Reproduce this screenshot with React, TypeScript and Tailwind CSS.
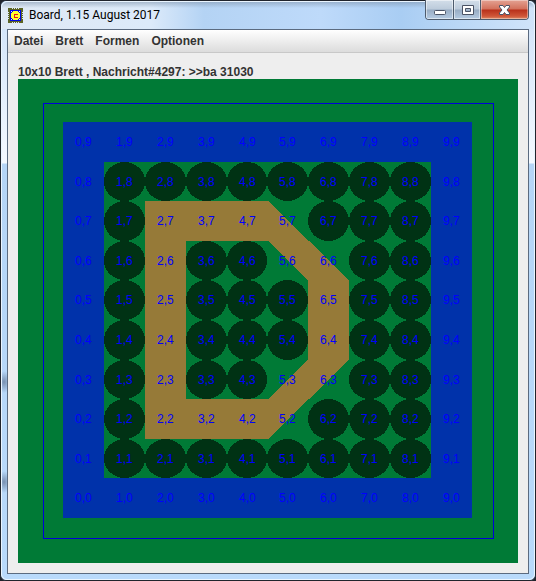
const N = 10;
const xs = [45, 86, 127, 168, 209, 249, 290, 331, 372, 413, 454];
const ys = [43, 83, 122, 162, 201, 241, 281, 320, 360, 399, 439];

// Cells of the inner area that belong to the shape and carry no disc, as "column,row".
const shapeCells = new Set([
  '2,7', '3,7', '4,7', '5,7', '2,6', '5,6', '6,6', '2,5', '6,5', '2,4', '6,4',
  '2,3', '5,3', '6,3', '2,2', '3,2', '4,2', '5,2',
]);

const cells = Array.from({ length: N * N }, (_, k) => {
  const col = k % N;
  const line = Math.floor(k / N);
  const row = N - 1 - line;
  const inner = col > 0 && col < N - 1 && row > 0 && row < N - 1;
  const label = `${col},${row}`;
  return { col, line, label, disc: inner && !shapeCells.has(label) };
});

function Board() {
  return (
    <svg viewBox="0 0 500 484" className="block w-full" role="img" aria-label="10x10 Brett">
      <g shapeRendering="crispEdges">
        <rect width="500" height="484" fill="#007a36" />
        <rect x="25.5" y="24.5" width="450" height="435" fill="none" stroke="#0000d8" />
        <rect x="45" y="43" width="409" height="396" fill="#0032aa" />
        <rect x="86" y="83" width="327" height="316" fill="#007a36" />
        {cells.filter((c) => c.disc).map((c) => (
          <ellipse
            key={c.label}
            cx={(xs[c.col] + xs[c.col + 1]) / 2}
            cy={(ys[c.line] + ys[c.line + 1]) / 2}
            rx={(xs[c.col + 1] - xs[c.col]) / 2}
            ry={(ys[c.line + 1] - ys[c.line]) / 2}
            fill="#003214"
          />
        ))}
        <path
          d="M127 122H250L331 201V281L250 360H127ZM168 162V320H250L290 281V201L250 162Z"
          fill="#967a38"
          fillRule="evenodd"
        />
      </g>
      <g fill="#0000ff" fontSize="12" className="font-['Liberation_Sans',Arial,sans-serif]">
        {cells.map((c) => (
          <text key={c.label} x={xs[c.col] + 12} y={ys[c.line] + 24}>{c.label}</text>
        ))}
      </g>
    </svg>
  );
}

function AppIcon() {
  return (
    <svg viewBox="0 0 15 15" className="size-[15px]" shapeRendering="crispEdges" aria-hidden="true">
      <path d="M0 0h4v1h1V0h1v1h1V0h1v1h1V0h1v1h1V0h4v4h-1v1h1v1h-1v1h1v1h-1v1h1v1h-1v1h1v4h-4v-1h-1v1h-1v-1h-1v1h-1v-1h-1v1h-1v-1h-1v1H0v-4h1v-1H0v-1h1V8H0V7h1V6H0V5h1V4H0z" fill="#5c6424" />
      <path d="M2 2h11v11H2z" fill="#0008e0" />
      <path d="M5 3h5v1h1v1h1v5h-1v1h-1v1H5v-1H4v-1H3V5h1V4h1z" fill="#ffff30" />
      <path d="M6 6h4v1H7v2h3v1H6z" fill="#e81818" />
      <path d="M3 3h1v1H3zM11 3h1v1h-1zM3 11h1v1H3zM11 11h1v1h-1z" fill="#e8f0ff" />
    </svg>
  );
}

const menus = ['Datei', 'Brett', 'Formen', 'Optionen'];

export default function App() {
  return (
    <div className="bg-[#20242c] font-['Liberation_Sans',Arial,sans-serif] text-xs">
      <div className="rounded-t-md rounded-b-md border border-[#20242c] bg-[#b9d8f8]">
        <div className="rounded-md border border-[#eaf5ff] bg-[radial-gradient(ellipse_7px_11px_at_2px_380px,#7890b0,transparent),radial-gradient(ellipse_7px_11px_at_2px_480px,#7890b0,transparent),linear-gradient(to_bottom,#c6dcf4_0px,#d5e6fa_30px,#f4f9ff_161px,#b5d5f6_162px,#b9dafb_100%)] px-[5px] pb-[5px]">
          <header className="-mx-[5px] flex h-[27px] items-start justify-between rounded-t-md bg-[linear-gradient(to_bottom,#8095ad90_0px,transparent_6px),linear-gradient(to_right,#dfe9f4_0%,#dceafa_28%,#b4d3f4_38%,#bedafa_60%,#a9cdf3_75%,#d0e4fa_100%)] pr-[5px] pl-1.5">
            <div className="flex h-[26px] items-center gap-1.5">
              <AppIcon />
              <h1 className="font-[Roboto,'Open_Sans',sans-serif] text-xs leading-4 text-black">Board, 1.15 August 2017</h1>
            </div>
            <div className="-mt-0.5 flex h-5 overflow-hidden rounded-b border border-t-0 border-[#4d5b6c]">
              <button aria-label="Minimieren" className="flex w-7 items-center justify-center border-r border-[#4d5b6c] bg-[linear-gradient(to_bottom,#d3dee9_0%,#bccbdb_48%,#98acc3_52%,#b5cbe2_100%)] shadow-[inset_0_0_0_1px_#ffffff80]">
                <svg viewBox="0 0 13 13" className="size-[13px]"><rect x="1.500" y="7.500" width="11" height="4" rx="1" fill="#fff" stroke="#4a5365" /></svg>
              </button>
              <button aria-label="Maximieren" className="flex w-[27px] items-center justify-center border-r border-[#4d5b6c] bg-[linear-gradient(to_bottom,#d3dee9_0%,#bccbdb_48%,#98acc3_52%,#b5cbe2_100%)] shadow-[inset_0_0_0_1px_#ffffff80]">
                <svg viewBox="0 0 13 13" className="size-[13px]"><path fillRule="evenodd" d="M1.500 2.500h11v9h-11zM4.500 5.500v3h5v-3z" fill="#fff" stroke="#4a5365" strokeLinejoin="round" /></svg>
              </button>
              <button aria-label="Schließen" className="flex w-[47px] items-center justify-center bg-[linear-gradient(to_bottom,#e4a293_0%,#d2705b_48%,#b8301a_52%,#cf5638_85%,#dd8a66_100%)] shadow-[inset_0_0_0_1px_#ffffff60]">
                <svg viewBox="0 0 13 13" className="size-[13px]"><path d="M1.500 2.500h3.500l1.500 2 1.500-2h3.500v1.500l-2.500 3 2.500 3v1.500h-3.500l-1.500-2-1.500 2h-3.500v-1.500l2.500-3-2.500-3z" fill="#fff" stroke="#4a5365" strokeLinejoin="round" /></svg>
              </button>
            </div>
          </header>
          <main className="border border-[#5b6b80] bg-[#eeeeee]">
            <nav className="flex h-[23px] items-center border-b border-[#c8c8c8] bg-linear-to-b from-white to-[#dcdcdc]">
              {menus.map((m) => (
                <button key={m} className="px-1.5 leading-4 font-bold text-[#333333]">{m}</button>
              ))}
            </nav>
            <div className="px-2.5 pt-3 pb-2.5">
              <p className="h-[14px] leading-[14px] font-bold whitespace-pre text-[#333333]">{'10x10 Brett , Nachricht#4297: >>ba 31030'}</p>
              <Board />
            </div>
          </main>
        </div>
      </div>
    </div>
  );
}
